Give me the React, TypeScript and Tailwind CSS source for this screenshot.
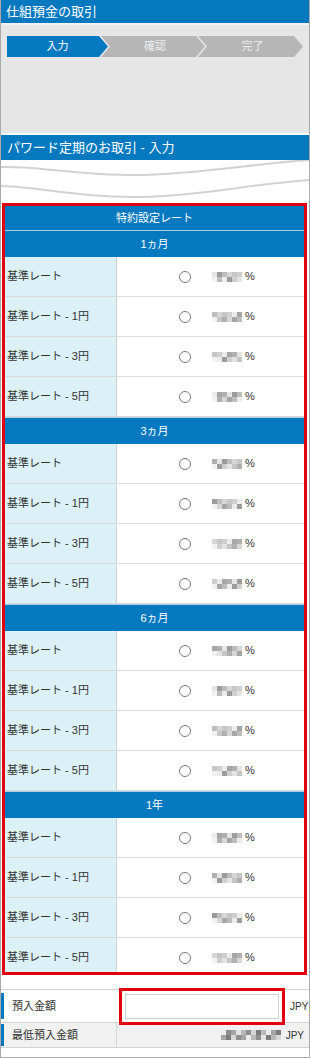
import React from "react";

const BLUE = "bg-[#0479bf]";

const shades = ["#e4e4e4", "#c6c6c6", "#b0b0b0", "#d6d6d6", "#a6a6a6", "#bdbdbd", "#ececec", "#9c9c9c", "#cfcfcf"];

function Mosaic({ seed, cols, dark }: { seed: number; cols: number; dark?: boolean }) {
  const rows = [0, 1];
  return (
    <div className="flex flex-col">
      {rows.map((r) => (
        <div key={r} className="flex">
          {Array.from({ length: cols }).map((_, c) => {
            let idx = (c * 7 + r * 4 + seed * 5 + c * r * 3) % shades.length;
            let col = shades[idx];
            if (dark && (c + r + seed) % 3 !== 0) col = ["#8e8e8e", "#a4a4a4", "#7c7c7c", "#b8b8b8"][(c + r * 2 + seed) % 4];
            if (!dark && r === 1 && c === 0) col = "#f2f2f2";
            return <div key={c} className="w-[5px] h-[5px]" style={{ backgroundColor: col }} />;
          })}
        </div>
      ))}
    </div>
  );
}

const periods = ["1ヵ月", "3ヵ月", "6ヵ月", "1年"];
const labels = ["基準レート", "基準レート - 1円", "基準レート - 3円", "基準レート - 5円"];

function Step({ label, active, first, w }: { label: string; active?: boolean; first?: boolean; w: string }) {
  const clip = first
    ? "[clip-path:polygon(0_0,calc(100%-9px)_0,100%_50%,calc(100%-9px)_100%,0_100%)]"
    : "[clip-path:polygon(0_0,calc(100%-9px)_0,100%_50%,calc(100%-9px)_100%,0_100%,9px_50%)]";
  return (
    <div
      className={`${w} h-[21px] flex items-center justify-center text-[11px] ${
        active ? "bg-[#0479bf] text-white" : "bg-[#b6b6b6] text-[#ececec]"
      } ${first ? "" : "-ml-[7px]"} ${clip}`}
    >
      <span className={first ? "" : "pl-[4px]"}>{label}</span>
    </div>
  );
}

export default function App() {
  return (
    <div className="w-[310px] h-[1058px] bg-white border-x border-b border-[#a9a9a9] font-['Liberation_Sans','Noto_Sans_CJK_JP',sans-serif] text-[#333] overflow-hidden">
      <div className={`${BLUE} h-[23px] flex items-center pl-[5px] text-white text-[13px]`}>仕組預金の取引</div>
      <div className="h-[2px] bg-[#f3f3f3]" />
      <div className="bg-[#e6e6e6] h-[108px] pt-[11px] pl-[6px]">
        <div className="flex">
          <Step label="入力" active first w="w-[101px]" />
          <Step label="確認" w="w-[104px]" />
          <Step label="完了" w="w-[105px]" />
        </div>
      </div>
      <div className="h-[2px] bg-white" />
      <div className={`${BLUE} h-[25px] flex items-center pl-[6px] text-white text-[13px]`}>パワード定期のお取引 - 入力</div>
      <div className="h-[43px]">
        <svg width="308" height="43" viewBox="0 0 308 43" className="block">
          <path d="M0,7 C40,6 80,16 140,15 C200,14 250,4 308,0" fill="none" stroke="#d2d2d2" strokeWidth="2" />
          <path d="M0,26 C40,27 80,38 140,37 C200,36 250,24 308,20" fill="none" stroke="#d2d2d2" strokeWidth="2" />
        </svg>
      </div>
      <div className="ml-[1px] mr-[2px] h-[772px] border-[3px] border-[#e00010] overflow-hidden">
        <div className={`${BLUE} h-[24px] flex items-center justify-center text-white text-[11px]`}>特約設定レート</div>
        {periods.map((p, pi) => (
          <div key={p}>
            <div className={`${BLUE} h-[27px] border-t border-[#a9cfe9] flex items-center justify-center text-white text-[11px]`}>{p}</div>
            {labels.map((l, li) => (
              <div key={l} className="flex h-[40px] border-b border-[#d9d9d9]">
                <div className="w-[112px] bg-[#dcf0f8] border-r border-[#d0d0d0] flex items-center pl-[2px] text-[11px]">{l}</div>
                <div className="flex-1 flex items-center">
                  <div className="ml-[62px] w-[12px] h-[12px] rounded-full border-[1.5px] border-[#7a7a7a] bg-white" />
                  <div className="ml-[21px]">
                    <Mosaic seed={pi * 4 + li} cols={6} />
                  </div>
                  <span className="ml-[3px] text-[11px]">%</span>
                </div>
              </div>
            ))}
          </div>
        ))}
      </div>
      <div className="mt-[14px] border-t border-[#d3d3d3]">
        <div className="flex h-[32px] items-center">
          <div className="w-[116px] self-stretch flex items-center">
            <div className="w-[3px] h-[26px] bg-[#0479bf]" />
            <span className="ml-[8px] text-[11px]">預入金額</span>
          </div>
          <div className="ml-[2px] w-[166px] h-[37px] border-[3px] border-[#e00010] p-[3px] bg-white">
            <div className="w-full h-full border border-[#cfcfcf] bg-white" />
          </div>
          <span className="ml-[5px] text-[10px]">JPY</span>
        </div>
        <div className="flex h-[26px] bg-[#f1f1f1] border-t border-[#d3d3d3] border-b">
          <div className="w-[116px] border-r border-[#d6d6d6] flex items-center">
            <div className="w-[3px] h-[22px] bg-[#0479bf]" />
            <span className="ml-[8px] text-[11px]">最低預入金額</span>
          </div>
          <div className="flex-1 flex items-center justify-end pr-[5px]">
            <Mosaic seed={3} cols={12} dark />
            <span className="ml-[5px] text-[10px]">JPY</span>
          </div>
        </div>
      </div>
    </div>
  );
}
